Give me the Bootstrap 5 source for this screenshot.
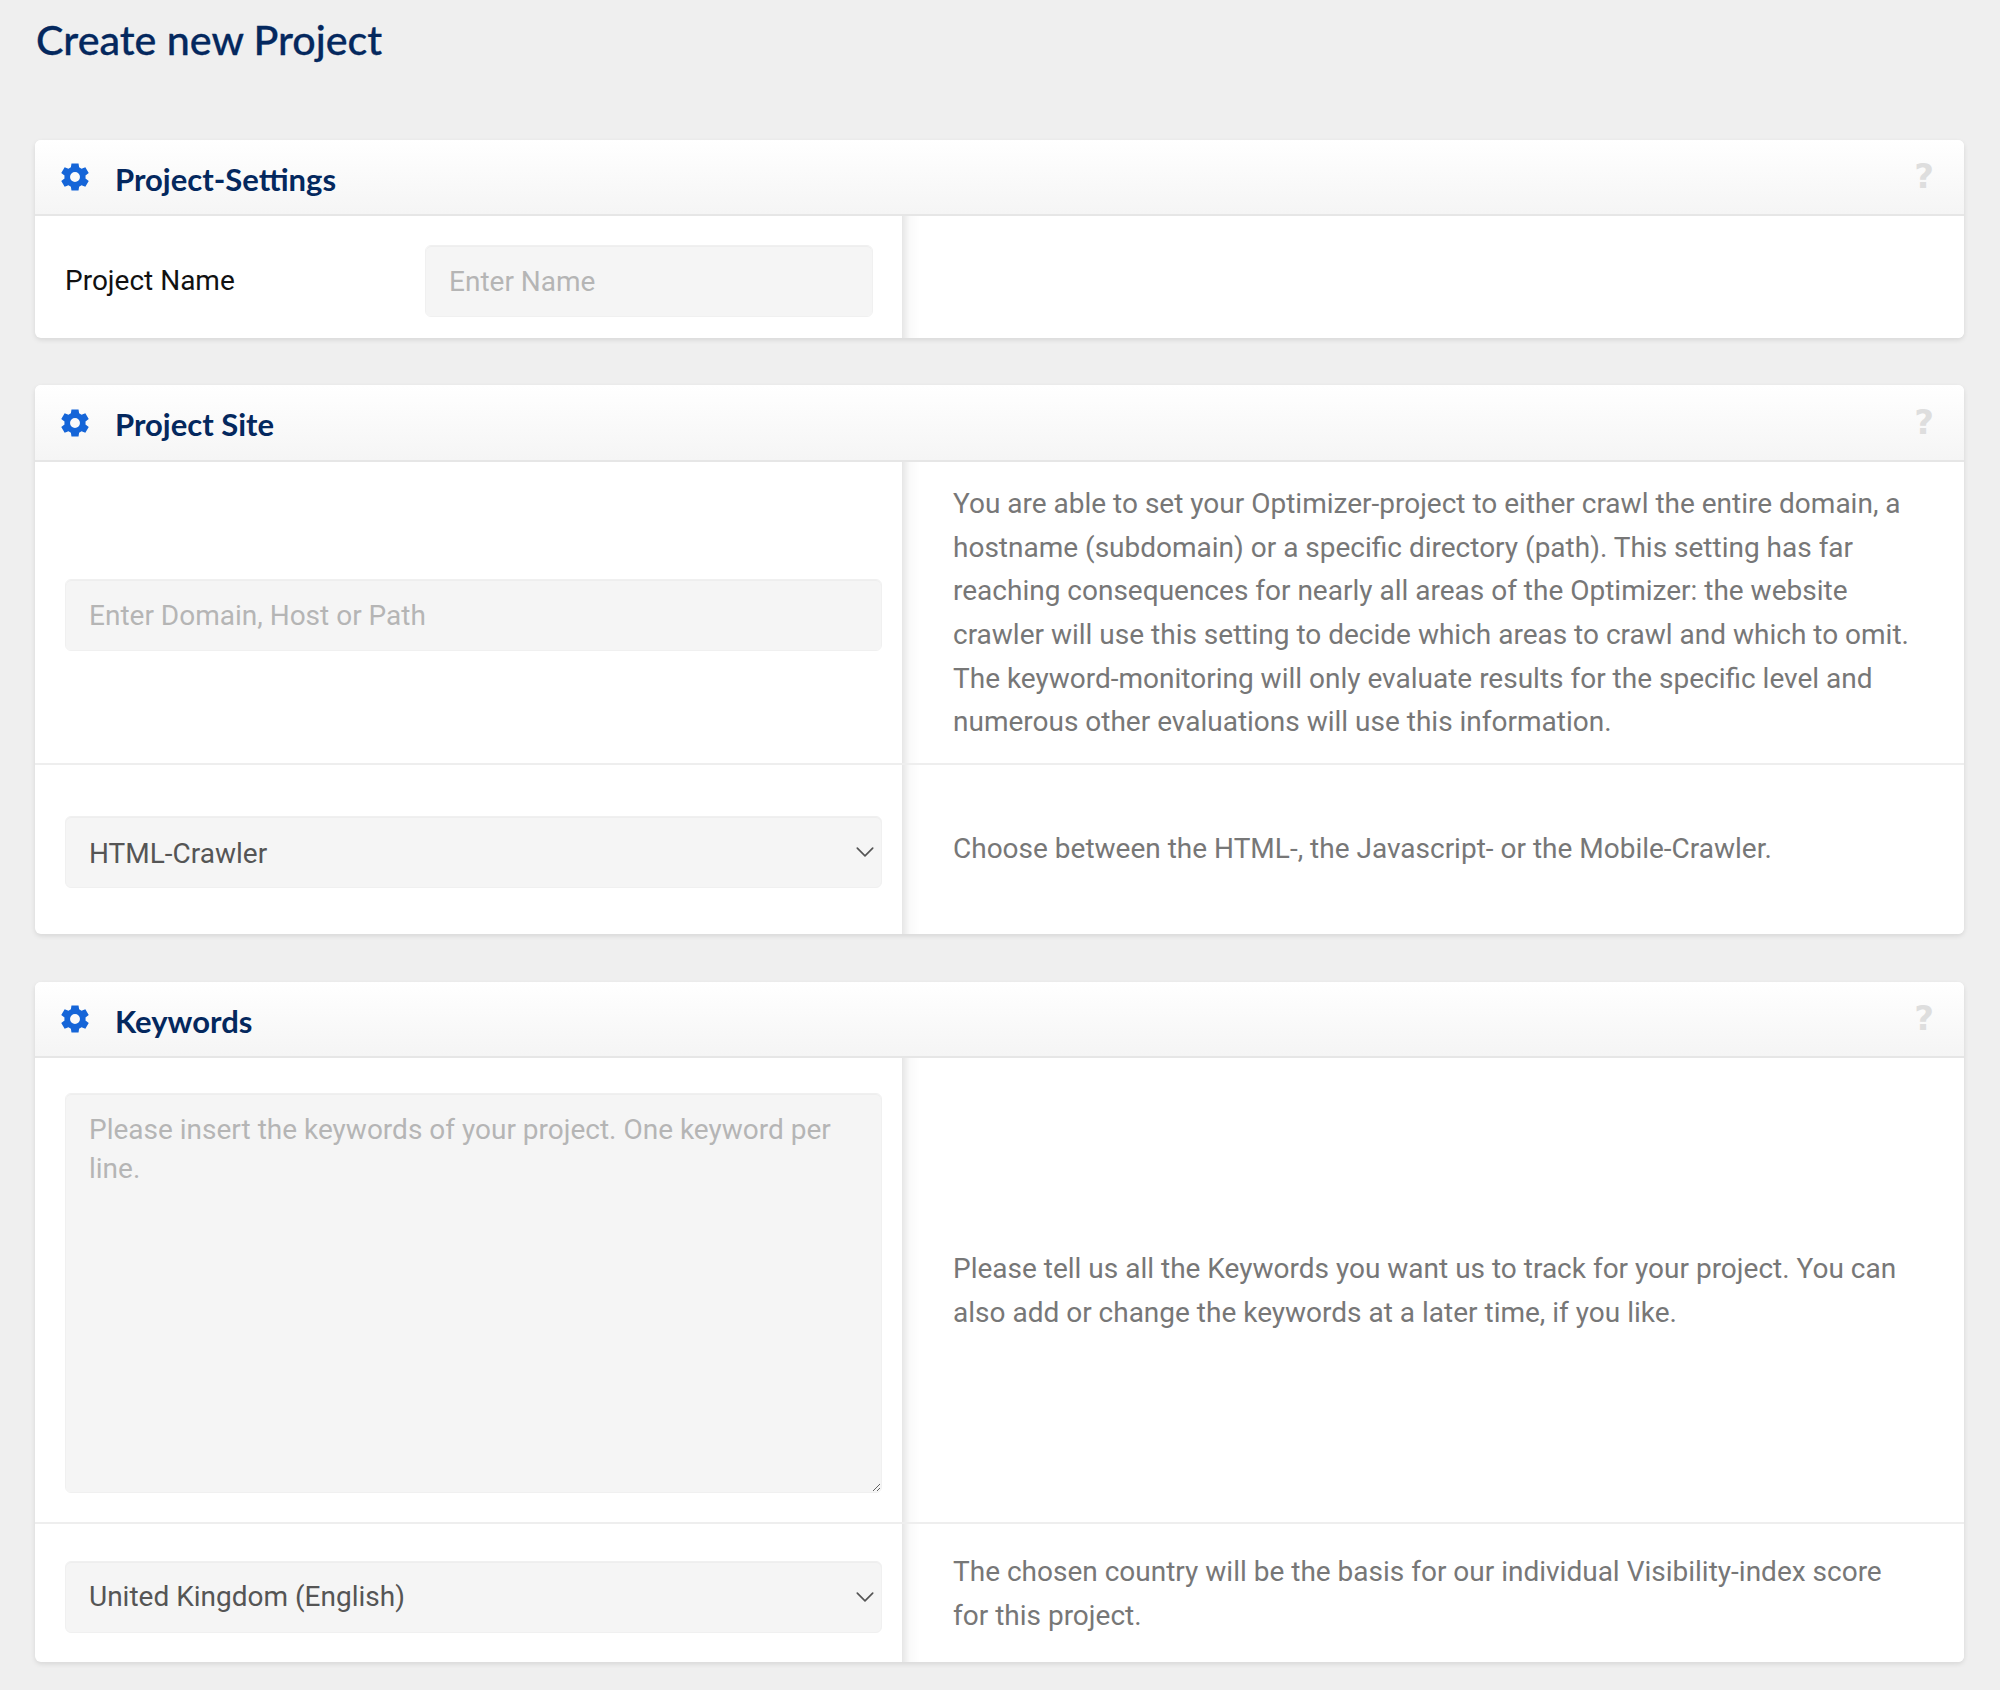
<!DOCTYPE html>
<html lang="en">
<head>
<meta charset="utf-8">
<title>Create new Project</title>
<link href="https://cdn.jsdelivr.net/npm/bootstrap@5.3.0/dist/css/bootstrap.min.css" rel="stylesheet">
<style>
body{background:#efefef;font-family:Roboto,"Liberation Sans",sans-serif;}
.page-wrap{padding:0 36px 0 35px;}
.page-title{font-family:Lato,"Liberation Sans",sans-serif;font-size:41.2px;line-height:48px;font-weight:500;color:#04285e;-webkit-text-stroke:.3px #04285e;margin:15px 0 0 1px;height:125px;}
.pcard{border:0;border-radius:6px;background:#fff;margin-bottom:47px;box-shadow:0 2px 5px rgba(0,0,0,.1);overflow:hidden;}
.pcard-site{margin-bottom:48px;}
.pcard-head{height:76px;background:linear-gradient(#fff,#f5f5f5);border-bottom:2px solid #e6e6e6;padding:0 30px 0 23px;}
.pcard-site .pcard-head{height:77px;}
.pcard-title{font-family:Lato,"Liberation Sans",sans-serif;font-size:31px;font-weight:700;color:#04285e;margin:5px 0 0 23px;}
.pcard-site .pcard-title{margin-top:4px;}
.help-mark{font-family:"DejaVu Sans",sans-serif;font-weight:700;font-size:34px;color:#dedede;line-height:1;margin-top:-2px;}
.pane-left{width:867px;flex:none;padding:8px 20px 0 30px;}
.pane-left-tight{padding-top:5px;}
.pane-left-area{padding-top:6px;}
.pane-right{flex:1;min-width:0;padding:1px 49px 0 51px;background:linear-gradient(90deg,#e6e6e6 0,#fafafa 8px,#fff 18px);font-size:28px;line-height:43.6px;color:#777;}
.pane-right-up{padding-top:0;padding-bottom:2px;}
.pane-right-low{padding-top:2px;}
.prow + .prow{border-top:2px solid #eee;}
.prow-a{height:122px;}
.prow-b{height:301px;}
.prow-c{height:171px;}
.prow-d{height:464px;}
.prow-e{height:140px;}
.name-label{width:360px;flex:none;font-size:28px;color:#111;}
.fld.form-control,.fld.form-select{height:72px;border:1px solid #f0f0f0;border-radius:6px;background-color:#f5f5f5;font-size:28px;padding:0 23px;color:#555;box-shadow:inset 0 1px 1px rgba(0,0,0,.03);}
.fld::placeholder{color:#b5b5b5;opacity:1;}
.fld.form-select{background-image:url("data:image/svg+xml,%3csvg xmlns='http://www.w3.org/2000/svg' viewBox='0 0 16 10'%3e%3cpath fill='none' stroke='%23555' stroke-width='1.5' stroke-linecap='round' stroke-linejoin='round' d='M1 1l7 7 7-7'/%3e%3c/svg%3e");background-size:18px 11px;background-position:right 7px center;}
.prow-c .fld.form-select{padding-top:3px;}
textarea.fld.form-control{height:400px;line-height:39px;padding:16px 23px;}
.name-field{width:448px;flex:none;}
.pane-right p{margin:0;}
</style>
</head>
<body>
<div class="page-wrap">
<h1 class="page-title">Create new Project</h1>

<section class="card pcard">
<div class="pcard-head d-flex align-items-center justify-content-between">
<div class="d-flex align-items-center">
<svg width="34" height="34" viewBox="0 0 24 24" fill="#1565d8"><path d="M19.4 13a7.5 7.5 0 0 0 0-2l2.300-1.800-2.400-4.100-2.700 1.100a7.500 7.500 0 0 0-1.700-1L14.500 2.400h-5L9.100 5.200a7.500 7.500 0 0 0-1.700 1L4.700 5.100 2.300 9.200 4.600 11a7.500 7.500 0 0 0 0 2l-2.300 1.800 2.400 4.100 2.700-1.100a7.500 7.500 0 0 0 1.700 1l.4 2.800h5l.4-2.800a7.500 7.500 0 0 0 1.700-1l2.700 1.100 2.400-4.100zM12 15.500a3.500 3.500 0 1 1 0-7 3.500 3.500 0 0 1 0 7z"/></svg>
<h2 class="pcard-title">Project-Settings</h2>
</div>
<span class="help-mark">?</span>
</div>
<div class="prow prow-a d-flex">
<div class="pane-left d-flex align-items-center">
<label class="name-label" for="pname">Project Name</label>
<div class="name-field"><input id="pname" class="form-control fld" placeholder="Enter Name"></div>
</div>
<div class="pane-right"></div>
</div>
</section>

<section class="card pcard pcard-site">
<div class="pcard-head d-flex align-items-center justify-content-between">
<div class="d-flex align-items-center">
<svg width="34" height="34" viewBox="0 0 24 24" fill="#1565d8"><path d="M19.4 13a7.5 7.5 0 0 0 0-2l2.300-1.800-2.400-4.100-2.700 1.100a7.500 7.500 0 0 0-1.700-1L14.500 2.400h-5L9.100 5.200a7.500 7.500 0 0 0-1.700 1L4.700 5.100 2.300 9.200 4.600 11a7.500 7.500 0 0 0 0 2l-2.300 1.800 2.400 4.100 2.700-1.100a7.500 7.500 0 0 0 1.700 1l.4 2.800h5l.4-2.800a7.500 7.500 0 0 0 1.700-1l2.700 1.100 2.400-4.100zM12 15.500a3.500 3.500 0 1 1 0-7 3.500 3.500 0 0 1 0 7z"/></svg>
<h2 class="pcard-title">Project Site</h2>
</div>
<span class="help-mark">?</span>
</div>
<div class="prow prow-b d-flex">
<div class="pane-left pane-left-tight d-flex align-items-center">
<input class="form-control fld" placeholder="Enter Domain, Host or Path">
</div>
<div class="pane-right d-flex align-items-center">
<p>You are able to set your Optimizer-project to either crawl the entire domain, a hostname (subdomain) or a specific directory (path). This setting has far reaching consequences for nearly all areas of the Optimizer: the website crawler will use this setting to decide which areas to crawl and which to omit. The keyword-monitoring will only evaluate results for the specific level and numerous other evaluations will use this information.</p>
</div>
</div>
<div class="prow prow-c d-flex">
<div class="pane-left pane-left-tight d-flex align-items-center">
<select class="form-select fld"><option>HTML-Crawler</option></select>
</div>
<div class="pane-right pane-right-up d-flex align-items-center">
<p>Choose between the HTML-, the Javascript- or the Mobile-Crawler.</p>
</div>
</div>
</section>

<section class="card pcard">
<div class="pcard-head d-flex align-items-center justify-content-between">
<div class="d-flex align-items-center">
<svg width="34" height="34" viewBox="0 0 24 24" fill="#1565d8"><path d="M19.4 13a7.5 7.5 0 0 0 0-2l2.300-1.800-2.400-4.100-2.700 1.100a7.500 7.500 0 0 0-1.700-1L14.500 2.400h-5L9.100 5.200a7.500 7.500 0 0 0-1.700 1L4.700 5.100 2.300 9.200 4.600 11a7.500 7.500 0 0 0 0 2l-2.300 1.800 2.400 4.100 2.700-1.100a7.500 7.500 0 0 0 1.700 1l.4 2.800h5l.4-2.800a7.500 7.500 0 0 0 1.700-1l2.700 1.100 2.400-4.100zM12 15.500a3.500 3.500 0 1 1 0-7 3.500 3.500 0 0 1 0 7z"/></svg>
<h2 class="pcard-title">Keywords</h2>
</div>
<span class="help-mark">?</span>
</div>
<div class="prow prow-d d-flex">
<div class="pane-left pane-left-area d-flex align-items-center">
<textarea class="form-control fld" placeholder="Please insert the keywords of your project. One keyword per line."></textarea>
</div>
<div class="pane-right d-flex align-items-center">
<p>Please tell us all the Keywords you want us to track for your project. You can also add or change the keywords at a later time, if you like.</p>
</div>
</div>
<div class="prow prow-e d-flex">
<div class="pane-left d-flex align-items-center">
<select class="form-select fld"><option>United Kingdom (English)</option></select>
</div>
<div class="pane-right pane-right-low d-flex align-items-center">
<p>The chosen country will be the basis for our individual Visibility-index score for this project.</p>
</div>
</div>
</section>
</div>
<script src="https://cdn.jsdelivr.net/npm/bootstrap@5.3.0/dist/js/bootstrap.bundle.min.js"></script>
</body>
</html>
